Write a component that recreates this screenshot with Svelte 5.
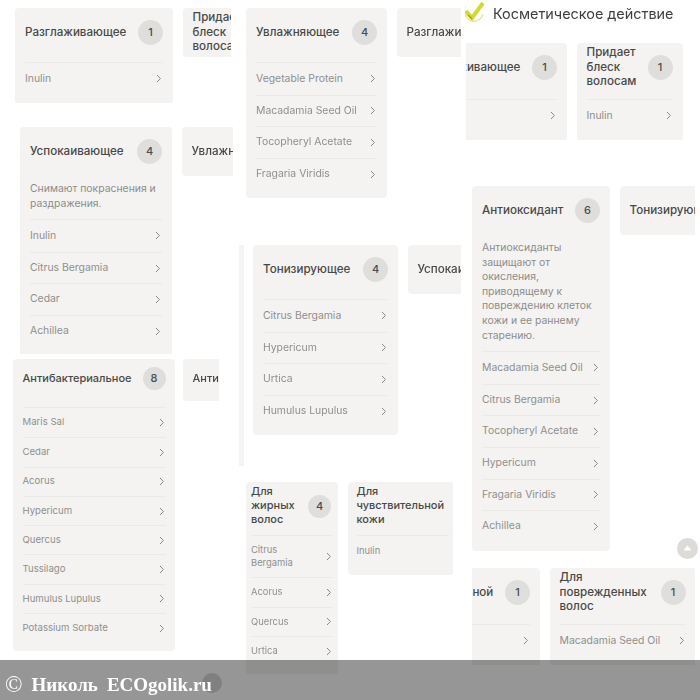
<script>
  const columns = [
    {
      rows: [
        {
          top: 8, left: 15, width: 216, height: 95,
          cards: [
            { width: 158, title: ['Разглаживающее'], count: 1, items: ['Inulin'] },
            { width: 70, title: ['Придает', 'блеск', 'волосам'], count: 1 }
          ]
        },
        {
          top: 24, left: 20, width: 213, height: 227,
          cards: [
            { width: 152, title: ['Успокаивающее'], count: 4, text: 'Снимают покраснения и раздражения.', items: ['Inulin', 'Citrus Bergamia', 'Cedar', 'Achillea'] },
            { width: 70, title: ['Увлажняющее'] }
          ]
        },
        {
          top: 5, left: 13, width: 206, height: 292, small: true,
          cards: [
            { width: 162, title: ['Антибактериальное'], count: 8, items: ['Maris Sal', 'Cedar', 'Acorus', 'Hypericum', 'Quercus', 'Tussilago', 'Humulus Lupulus', 'Potassium Sorbate'] },
            { width: 70, title: ['Антиоксидант'] }
          ]
        }
      ]
    },
    {
      rows: [
        {
          top: 8, left: 6, width: 215, height: 190,
          cards: [
            { width: 141, title: ['Увлажняющее'], count: 4, items: ['Vegetable Protein', 'Macadamia Seed Oil', 'Tocopheryl Acetate', 'Fragaria Viridis'] },
            { width: 90, title: ['Разглаживающее'] }
          ]
        },
        {
          top: 47, left: 13, width: 208, height: 190,
          cards: [
            { width: 145, title: ['Тонизирующее'], count: 4, items: ['Citrus Bergamia', 'Hypericum', 'Urtica', 'Humulus Lupulus'] },
            { width: 80, title: ['Успокаивающее'] }
          ]
        },
        {
          top: 47, left: 6, width: 207, height: 192, tiny: true,
          cards: [
            { width: 92, title: ['Для', 'жирных', 'волос'], count: 4, items: [['Citrus', 'Bergamia'], 'Acorus', 'Quercus', 'Urtica'] },
            { width: 106, title: ['Для', 'чувствительной', 'кожи'], items: ['Inulin'], plain: true, roomy: true }
          ]
        }
      ]
    }
  ];

  const third = [
    {
      top: 17, left: 1, width: 217, height: 97, airy: true,
      cards: [
        { width: 158, shift: -57, title: ['Разглаживающее'], count: 1, items: [''] },
        { width: 106, title: ['Придает', 'блеск', 'волосам'], count: 1, items: ['Inulin'] }
      ]
    },
    {
      top: 46, left: 7, width: 223, height: 366,
      cards: [
        { width: 138, title: ['Антиоксидант'], count: 6, text: 'Антиоксиданты защищают от окисления, приводящему к повреждению клеток кожи и ее раннему старению.', items: ['Macadamia Seed Oil', 'Citrus Bergamia', 'Tocopheryl Acetate', 'Hypericum', 'Fragaria Viridis', 'Achillea'] },
        { width: 100, title: ['Тонизирующее'] }
      ]
    },
    {
      top: 16, left: 7, width: 223, height: 97, airy: true,
      cards: [
        { width: 149, shift: -81, title: ['Для', 'чувствительной', 'кожи'], count: 1, items: [''] },
        { width: 146, title: ['Для', 'поврежденных', 'волос'], count: 1, items: ['Macadamia Seed Oil'] }
      ]
    }
  ];
</script>

{#snippet row(r)}
  <div
    class="row"
    class:small={r.small}
    class:tiny={r.tiny}
    class:airy={r.airy}
    style="margin-top: {r.top}px; margin-left: {r.left}px; width: {r.width}px; height: {r.height}px"
  >
    {#each r.cards as card}
      <div class="card" class:roomy={card.roomy} style="width: {card.width}px; margin-left: {card.shift ?? 0}px">
        <div class="head">
          <div class="title">
            {#each card.title as line}<div>{line}</div>{/each}
          </div>
          {#if card.count}<span class="badge">{card.count}</span>{/if}
        </div>
        {#if card.items}
          {#if card.text}<p class="text">{card.text}</p>{/if}
          <ul>
            {#each card.items as item}
              <li class:multi={Array.isArray(item)}>
                <span class="name">
                  {#if Array.isArray(item)}
                    {#each item as part}<div>{part}</div>{/each}
                  {:else}
                    {item}
                  {/if}
                </span>
                {#if !card.plain}
                  <svg class="chev" width="6" height="9" viewBox="0 0 6 9" aria-hidden="true">
                    <path d="M1 1l3.4 3.5L1 8" fill="none" stroke="currentColor" stroke-width="1" />
                  </svg>
                {/if}
              </li>
            {/each}
          </ul>
        {/if}
      </div>
    {/each}
  </div>
{/snippet}

<div class="page">
  <div class="shots">
    {#each columns as col}
      <div class="col">
        {#each col.rows as r}
          {@render row(r)}
        {/each}
      </div>
    {/each}

    <div class="col last">
      <header class="topbar">
        <svg class="check" width="24" height="24" viewBox="0 0 24 24" aria-hidden="true">
          <path d="M3 5c-1 7 1 13 7 15 5 1 9-2 11-7" fill="none" stroke="#e4e69a" stroke-width="1.3" />
          <path d="M4 10l6 7L21 2" fill="none" stroke="#d4d92f" stroke-width="4" />
          <path d="M6 14l4 4" fill="none" stroke="#a5aa1e" stroke-width="1.6" />
        </svg>
        <h1>Косметическое действие</h1>
      </header>
      {#each third as r}
        {@render row(r)}
      {/each}
      <button class="up" aria-label="Наверх">
        <svg width="9" height="6" viewBox="0 0 9 6"><path d="M4.5 0.5L8.5 5.5H0.5z" fill="#fff" /></svg>
      </button>
    </div>
  </div>

  <div class="strip"></div>
  <div class="stamp">
    <span class="round"></span>
    <span class="copy">©</span>
    <span>Николь</span>
    <span>ECOgolik.ru</span>
  </div>
</div>

<style>
  :global(body) {
    margin: 0;
    background: #fff;
  }

  .page {
    position: relative;
    width: 700px;
    height: 700px;
    overflow: hidden;
    background: #fff;
    font-family: Inter, "Noto Sans", sans-serif;
  }

  .shots {
    display: flex;
    height: 700px;
    filter: blur(0.35px);
  }

  .col {
    width: 240px;
    flex: none;
    overflow: hidden;
    height: 700px;
  }

  .col:nth-child(2) {
    width: 225px;
  }

  .col.last {
    position: relative;
    width: 235px;
  }

  .row {
    --title: 11.6px;
    --item: 10.4px;
    --line: 14.6px;
    --head: 48px;
    --head-gap: 5px;
    --head-tail: 1px;
    --item-h: 31.6px;
    --pad: 10px;
    --badge: 25px;
    display: flex;
    gap: 9.5px;
    align-items: flex-start;
    overflow: hidden;
  }

  .row.airy {
    --head-gap: 7px;
    --line: 14.8px;
  }

  .row.small {
    --title: 11px;
    --item: 9.6px;
    --head: 38px;
    --head-gap: 6px;
    --head-tail: 4px;
    --item-h: 29.3px;
    --pad: 9.5px;
    --badge: 23px;
    gap: 8px;
  }

  .row.tiny {
    --title: 11px;
    --item: 9.4px;
    --line: 13.7px;
    --head: 48px;
    --head-gap: 3px;
    --head-tail: 2px;
    --item-h: 29.5px;
    --pad: 5px;
    --badge: 23px;
  }

  .tiny .badge {
    margin-right: 2px;
  }

  .card {
    flex: none;
    box-sizing: border-box;
    padding: 0 var(--pad);
    background: #f4f3f1;
    border-radius: 4px;
  }

  .card.roomy {
    padding-left: 9px;
  }

  .head {
    display: flex;
    align-items: center;
    justify-content: space-between;
    gap: 6px;
    height: var(--head);
    padding-bottom: var(--head-tail);
  }

  .title {
    font-size: var(--title);
    line-height: var(--line);
    font-weight: 500;
    color: #484848;
    white-space: nowrap;
  }

  .badge {
    display: flex;
    align-items: center;
    justify-content: center;
    flex: none;
    width: var(--badge);
    height: var(--badge);
    border-radius: 50%;
    background: #dededc;
    color: #4c4c4c;
    font-size: 11px;
    font-weight: 500;
  }

  .text {
    margin: 6px 0 0;
    font-size: 10.4px;
    line-height: 14.6px;
    color: #8c8c8c;
  }

  ul {
    list-style: none;
    margin: var(--head-gap) 0 0;
    padding: 0 0 9px;
    border-top: 1px solid #ebeae8;
  }

  .text + ul {
    margin-top: 8px;
  }

  li {
    display: flex;
    align-items: center;
    justify-content: space-between;
    min-height: var(--item-h);
    box-sizing: border-box;
    font-size: var(--item);
    line-height: 12.5px;
    color: #8f8f8f;
  }

  li.multi {
    padding: 8px 0;
  }

  li + li {
    border-top: 1px solid #ebeae8;
  }

  .chev {
    color: #8a8a8a;
    margin-right: 1px;
    flex: none;
  }

  .topbar {
    display: flex;
    align-items: center;
    gap: 7px;
    height: 26px;
    margin-left: -3px;
  }

  .check {
    flex: none;
    margin-top: -1px;
  }

  h1 {
    margin: 0;
    font-size: 14.4px;
    font-weight: 400;
    color: #3e3e3e;
    white-space: nowrap;
  }

  .up {
    position: absolute;
    left: 212px;
    top: 538px;
    display: flex;
    align-items: center;
    justify-content: center;
    width: 21px;
    height: 21px;
    padding: 0 0 2px;
    border: 0;
    border-radius: 50%;
    background: #dcdbd8;
  }

  .strip {
    position: absolute;
    left: 239px;
    top: 245px;
    width: 5px;
    height: 221px;
    background: #f5f4f2;
  }

  .stamp {
    position: absolute;
    left: 0;
    right: 0;
    top: 660px;
    height: 40px;
    display: flex;
    align-items: center;
    gap: 9px;
    padding: 10px 0 0 5px;
    box-sizing: border-box;
    background: rgba(0, 0, 0, 0.41);
    color: #fff;
    font-family: "Liberation Serif", serif;
    font-weight: 700;
    font-size: 19px;
  }

  .stamp span {
    position: relative;
  }

  .copy {
    font-weight: 400;
    font-size: 23px;
  }

  .stamp .round {
    position: absolute;
    left: 202px;
    top: 13px;
    width: 20px;
    height: 20px;
    border-radius: 50%;
    background: #808080;
  }
</style>
